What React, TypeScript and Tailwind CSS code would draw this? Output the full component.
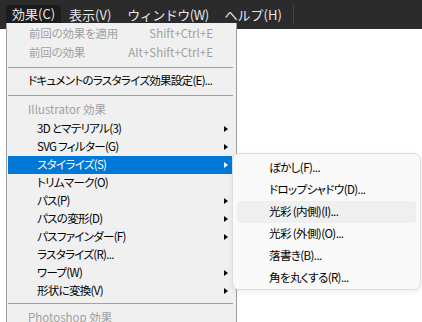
const font = "font-['Noto_Sans_CJK_JP','Noto_Sans',sans-serif]";

type Item = { label: string; arrow?: boolean; active?: boolean };

const effects: Item[] = [
  { label: "3D とマテリアル(3)", arrow: true },
  { label: "SVG フィルター(G)", arrow: true },
  { label: "スタイライズ(S)", arrow: true, active: true },
  { label: "トリムマーク(O)" },
  { label: "パス(P)", arrow: true },
  { label: "パスの変形(D)", arrow: true },
  { label: "パスファインダー(F)", arrow: true },
  { label: "ラスタライズ(R)..." },
  { label: "ワープ(W)", arrow: true },
  { label: "形状に変換(V)", arrow: true },
];

const stylize = [
  "ぼかし(F)...",
  "ドロップシャドウ(D)...",
  "光彩 (内側)(I)...",
  "光彩 (外側)(O)...",
  "落書き(B)...",
  "角を丸くする(R)...",
];

const Separator = ({ cls }: { cls: string }) => (
  <div className={cls}>
    <div className="h-px ml-px mr-[3px] bg-[#a0a0a0]" />
  </div>
);

const Arrow = ({ white }: { white?: boolean }) => (
  <span
    className={`ml-auto mr-[4px] w-0 h-0 border-y-[3.5px] border-y-transparent border-l-[4px] ${
      white ? "border-l-white" : "border-l-black"
    }`}
  />
);

const App = () => {
  return (
    <div
      className={`relative w-[422px] h-[322px] overflow-hidden bg-white ${font} [font-feature-settings:'palt']`}
    >
      {/* menu bar */}
      <div className="flex items-center h-[29px] bg-[#2b2b2b] text-[13px] text-[#e6e6e6] [font-feature-settings:normal]">
        <div className="ml-[6px] h-[19px] mt-[-1px] px-[6px] flex items-center rounded-[3px] bg-[#1c1c1c]">
          効果(C)
        </div>
        <div className="ml-[2px] px-[6px]">表示(V)</div>
        <div className="ml-[4px] px-[6px] tracking-[-0.5px]">ウィンドウ(W)</div>
        <div className="ml-[4px] px-[6px]">ヘルプ(H)</div>
        <div className="ml-[5px] w-px h-[19px] bg-[#444444]" />
      </div>

      {/* effects menu */}
      <div className="absolute left-[6px] top-[23px] w-[231px] bg-[#f0f0f0] border-x border-[#9c9c9c] text-[11.5px] tracking-[-0.7px] text-black">
        <div className="flex items-center h-[19px] mt-px ml-px mr-[4px] pl-[21px] pr-[19px] text-[#a0a0a0] tracking-[-0.2px]">
          前回の効果を適用
          <span className="ml-auto tracking-normal">Shift+Ctrl+E</span>
        </div>
        <div className="flex items-center h-[20px] ml-px mr-[4px] pl-[21px] pr-[19px] text-[#a0a0a0] tracking-[-0.2px]">
          前回の効果
          <span className="ml-auto tracking-normal">Alt+Shift+Ctrl+E</span>
        </div>
        <Separator cls="pt-[4px] pb-[4px]" />
        <div className="flex items-center h-[18px] ml-px mr-[4px] pl-[20px]">
          ドキュメントのラスタライズ効果設定(E)...
        </div>
        <Separator cls="pt-[5px] pb-[4px]" />
        <div className="flex items-center h-[20px] ml-px mr-[4px] pl-[20px] text-[#a0a0a0] tracking-normal">
          Illustrator 効果
        </div>
        {effects.map((item) => (
          <div
            key={item.label}
            className={`flex items-center h-[18px] ml-px mr-[4px] pl-[29px] ${
              item.active ? "bg-[#0078d7] text-white" : ""
            }`}
          >
            {item.label}
            {item.arrow && <Arrow white={item.active} />}
          </div>
        ))}
        <Separator cls="pt-[3px] pb-[4px]" />
        <div className="flex items-center h-[20px] ml-px mr-[4px] pl-[20px] text-[#a0a0a0] tracking-normal">
          Photoshop 効果
        </div>
      </div>

      {/* stylize submenu */}
      <div className="absolute left-[232px] top-[153px] w-[189px] h-[137px] rounded-[7px] border border-[#dedede] bg-[#f9f9f9] shadow-[0_2px_6px_rgba(0,0,0,0.08)] px-[4px] py-[3px] text-[11.5px] tracking-[-0.6px] text-black">
        {stylize.map((label, i) => (
          <div
            key={label}
            className={`flex items-center h-[22px] pl-[32px] rounded-[4px] ${
              i === 2 ? "bg-[#efefef]" : ""
            }`}
          >
            {label}
          </div>
        ))}
      </div>
    </div>
  );
};

export default App;
